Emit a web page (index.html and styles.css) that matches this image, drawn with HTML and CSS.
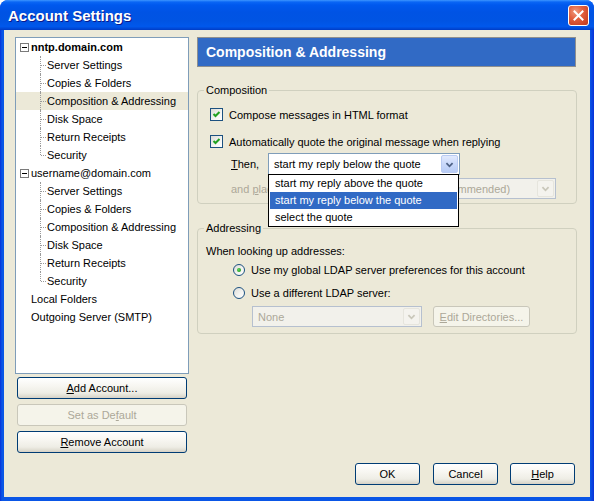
FILE: index.html
```html
<!DOCTYPE html>
<html>
<head>
<meta charset="utf-8">
<link rel="stylesheet" href="styles.css">
</head>
<body>
<div class="window">
  <div class="titlebar">
    <span class="title">Account Settings</span>
    <div class="close">
      <svg width="19" height="19" viewBox="0 0 19 19"><path d="M5.5 5.5 L13.5 13.5 M13.5 5.5 L5.5 13.5" stroke="#fff" stroke-width="2" stroke-linecap="square" fill="none"/></svg>
    </div>
  </div>
  <div class="client">
    <div class="main">
      <div class="left">
        <div class="tree">
          <div class="row root"><span class="exp"><svg width="9" height="9" viewBox="0 0 9 9"><rect x="0.5" y="0.5" width="8" height="8" fill="#fff" stroke="#7A7A7A"/><path d="M2 4.5 H7" stroke="#000" stroke-width="1"/></svg></span><b>nntp.domain.com</b></div>
          <div class="kids">
            <div class="row kid">Server Settings</div>
            <div class="row kid">Copies &amp; Folders</div>
            <div class="row kid sel">Composition &amp; Addressing</div>
            <div class="row kid">Disk Space</div>
            <div class="row kid">Return Receipts</div>
            <div class="row kid last">Security</div>
          </div>
          <div class="row root"><span class="exp"><svg width="9" height="9" viewBox="0 0 9 9"><rect x="0.5" y="0.5" width="8" height="8" fill="#fff" stroke="#7A7A7A"/><path d="M2 4.5 H7" stroke="#000" stroke-width="1"/></svg></span>username@domain.com</div>
          <div class="kids">
            <div class="row kid">Server Settings</div>
            <div class="row kid">Copies &amp; Folders</div>
            <div class="row kid">Composition &amp; Addressing</div>
            <div class="row kid">Disk Space</div>
            <div class="row kid">Return Receipts</div>
            <div class="row kid last">Security</div>
          </div>
          <div class="row top">Local Folders</div>
          <div class="row top">Outgoing Server (SMTP)</div>
        </div>
        <div class="btn side first"><span><u>A</u>dd Account...</span></div>
        <div class="btn side disabled"><span>Set as De<u>f</u>ault</span></div>
        <div class="btn side"><span><u>R</u>emove Account</span></div>
      </div>
      <div class="right">
        <div class="header">Composition &amp; Addressing</div>
        <fieldset class="group comp">
          <legend>Composition</legend>
          <div class="line cbrow r1">
            <span class="cb"><svg width="11" height="11" viewBox="0 0 11 11"><path d="M2.5 5 L4.5 7 L8.5 3" stroke="#21A121" stroke-width="2" fill="none"/></svg></span>
            <span class="lbl">Compose messages in HTML format</span>
          </div>
          <div class="line cbrow r2">
            <span class="cb"><svg width="11" height="11" viewBox="0 0 11 11"><path d="M2.5 5 L4.5 7 L8.5 3" stroke="#21A121" stroke-width="2" fill="none"/></svg></span>
            <span class="lbl">Automatically quote the original message when replying</span>
          </div>
          <div class="line selrow r3">
            <span class="slabel then"><u>T</u>hen,</span>
            <div class="combo-wrap">
              <div class="combo w-then">
                <span class="val">start my reply below the quote</span>
                <span class="arrow"><svg width="17" height="19" viewBox="0 0 17 19"><path d="M5 8 L8.5 11.5 L12 8" stroke="#4D6185" stroke-width="2" fill="none"/></svg></span>
              </div>
              <div class="list">
                <div class="item">start my reply above the quote</div>
                <div class="item hi">start my reply below the quote</div>
                <div class="item">select the quote</div>
              </div>
            </div>
          </div>
          <div class="line selrow r4">
            <span class="slabel sig dis">and <u>p</u>lace my signature</span>
            <div class="combo disabled w-sig">
              <span class="val">below my reply (recommended)</span>
              <span class="arrow"><svg width="17" height="19" viewBox="0 0 17 19"><path d="M5 8 L8.5 11.5 L12 8" stroke="#C9C7BA" stroke-width="2" fill="none"/></svg></span>
            </div>
          </div>
        </fieldset>
        <fieldset class="group addr">
          <legend>Addressing</legend>
          <div class="line look">When looking up addresses:</div>
          <div class="line radrow ra1">
            <span class="radio on"><span class="dot"></span></span>
            <span class="lbl">Use my global LDAP server preferences for this account</span>
          </div>
          <div class="line radrow ra2">
            <span class="radio"></span>
            <span class="lbl">Use a different LDAP server:</span>
          </div>
          <div class="line ldaprow">
            <div class="combo disabled w-none">
              <span class="val">None</span>
              <span class="arrow"><svg width="17" height="19" viewBox="0 0 17 19"><path d="M5 8 L8.5 11.5 L12 8" stroke="#C9C7BA" stroke-width="2" fill="none"/></svg></span>
            </div>
            <div class="btn disabled edit"><span><u>E</u>dit Directories...</span></div>
          </div>
        </fieldset>
      </div>
    </div>
    <div class="footer">
      <div class="btn foot ok"><span>OK</span></div>
      <div class="btn foot cancel"><span>Cancel</span></div>
      <div class="btn foot help"><span><u>H</u>elp</span></div>
    </div>
  </div>
</div>
</body>
</html>
```

FILE: styles.css
```css
* { box-sizing: border-box; }

body {
  margin: 0;
  background: #ffffff;
  font-family: "Liberation Sans", Arial, sans-serif;
  font-size: 11px;
  color: #000;
}

u { text-decoration: underline; text-underline-offset: 1px; }

.window {
  width: 594px;
  height: 501px;
  background: linear-gradient(90deg, #0831D9 0, #0A56E6 2px, #0A56E6 590px, #0831D9 594px);
  border-radius: 8px 8px 0 0;
  display: flex;
  flex-direction: column;
  overflow: hidden;
}

.titlebar {
  height: 30px;
  flex: none;
  display: flex;
  align-items: center;
  justify-content: space-between;
  padding: 0 5px 0 8px;
  background: linear-gradient(180deg, #3D95FF 0, #0A66F5 2px, #0058EE 5px, #0053E4 40%, #0054E3 70%, #0058EC 88%, #0046D4 96%, #003CC4 100%);
}

.title {
  color: #fff;
  font-weight: bold;
  font-size: 15px;
  text-shadow: 1px 1px 0 #0A1A8C;
  margin-top: 1px;
}

.close {
  width: 21px;
  height: 21px;
  border: 1px solid #fff;
  border-radius: 3px;
  background: radial-gradient(circle at 35% 30%, #F09A7E 0, #E2603F 40%, #CC4426 80%, #B53A1E 100%);
  margin-top: 1px;
}
.close svg { display: block; }

.client {
  flex: 1;
  margin: 0 4px 4px;
  background: #ECE9D8;
  padding: 7px 13px 0 11px;
  display: flex;
  flex-direction: column;
}

.main { display: flex; gap: 8px; }

.left { width: 174px; display: flex; flex-direction: column; }

.tree {
  height: 337px;
  border: 1px solid #7F9DB9;
  background: #fff;
}

.row {
  height: 18px;
  line-height: 18px;
  white-space: nowrap;
  position: relative;
}
.row.root { padding-left: 4px; display: flex; align-items: center; }
.exp { width: 9px; height: 9px; margin-right: 2px; display: inline-block; }
.exp svg { display: block; }
.row.top { padding-left: 15px; }
.row.kid { padding-left: 31px; }
.row.kid.sel { background: #ECE9D8; }
.row.kid::before {
  content: "";
  position: absolute;
  left: 24px;
  top: 0;
  height: 18px;
  border-left: 1px dotted #9A9A9A;
}
.row.kid.last::before { height: 9px; }
.row.kid::after {
  content: "";
  position: absolute;
  left: 25px;
  top: 9px;
  width: 5px;
  border-top: 1px dotted #9A9A9A;
}

.btn {
  height: 22px;
  border: 1px solid #003C74;
  border-radius: 3px;
  background: linear-gradient(180deg, #FFFFFF 0, #F7F6F1 40%, #EEEDE5 75%, #DEDBD0 92%, #D6D0C5 100%);
  display: flex;
  align-items: center;
  justify-content: center;
  white-space: nowrap;
}
.btn.disabled {
  border-color: #C9C7BA;
  background: #F5F4EA;
  color: #ACA899;
}

.btn.side { width: 170px; margin: 5px 0 0 2px; }
.btn.side.first { margin-top: 3px; }

.right { width: 380px; }

.header {
  width: 379px;
  height: 30px;
  border: 1px solid #8E8F8F;
  background: #316AC5;
  color: #fff;
  font-weight: bold;
  font-size: 14px;
  padding-left: 8px;
  display: flex;
  align-items: center;
}

.group {
  margin: 0;
  border: 1px solid #D0D0BF;
  border-radius: 4px;
  min-width: 0;
}
.group legend {
  line-height: 13px;
  padding: 0 2px;
}
.group.comp { margin-top: 17px; padding: 11px 0 4px 12px; }
.group.comp legend { margin-left: -6px; }
.group.addr { margin-top: 18px; padding: 9px 0 6px 8px; }
.group.addr legend { margin-left: -2px; }

.line { display: flex; align-items: center; white-space: nowrap; }

.cbrow { height: 13px; }
.cbrow.r2 { margin-top: 14px; }
.cb {
  width: 13px;
  height: 13px;
  border: 1px solid #1C5180;
  background: linear-gradient(135deg, #DCDCD7 0, #F5F5F3 60%, #FFFFFF 100%);
  flex: none;
}
.cb svg { display: block; }
.lbl { margin-left: 6px; }

.selrow { margin-left: 21px; }
.selrow.r3 { margin-top: 5px; height: 22px; }
.selrow.r4 { margin-top: 3px; height: 21px; }
.slabel.then { width: 37px; }
.slabel.sig { width: 119px; }
.dis { color: #ACA899; }

.combo-wrap { position: relative; z-index: 5; }

.combo {
  height: 22px;
  border: 1px solid #7F9DB9;
  background: #fff;
  display: flex;
  align-items: center;
  padding: 1px;
}
.combo .val { flex: 1; padding-left: 4px; overflow: hidden; }
.combo .arrow {
  width: 17px;
  height: 100%;
  border: 1px solid #B9CBF3;
  border-radius: 2px;
  background: linear-gradient(180deg, #E2EAFD 0, #C9D8FA 50%, #B8CCF6 100%);
  display: flex;
  align-items: center;
  justify-content: center;
  flex: none;
}
.combo .arrow svg { display: block; }
.combo.disabled {
  height: 21px;
  border-color: #B6C0CF;
  background: #F2F1EB;
  color: #ACA899;
}
.combo.disabled .arrow {
  border-color: #E6E5DD;
  background: #F4F3EE;
}

.w-then { width: 192px; }
.w-sig { width: 206px; }
.w-none { width: 170px; }

.list {
  position: absolute;
  left: 0;
  top: 21px;
  width: 191px;
  border: 1px solid #000;
  background: #fff;
  padding: 0;
}
.item {
  height: 17px;
  line-height: 17px;
  padding-left: 6px;
}
.item.hi {
  background: #316AC5;
  color: #fff;
  margin: 0 1px;
  padding-left: 5px;
}

.look { height: 13px; }
.radrow { margin-left: 27px; height: 12px; }
.radrow.ra1 { margin-top: 7px; }
.radrow.ra2 { margin-top: 11px; }
.radio {
  width: 12px;
  height: 12px;
  border-radius: 50%;
  border: 1px solid #1C5180;
  background: linear-gradient(135deg, #DCDCD7 0, #F3F3F0 55%, #FFFFFF 100%);
  display: flex;
  align-items: center;
  justify-content: center;
  flex: none;
}
.radio .dot {
  width: 4px;
  height: 4px;
  border-radius: 50%;
  background: radial-gradient(circle at 40% 40%, #5FD35F 0, #21A121 70%);
}

.ldaprow { margin-left: 46px; margin-top: 7px; height: 21px; }
.btn.edit { width: 97px; height: 21px; margin-left: 11px; }

.footer {
  display: flex;
  justify-content: flex-end;
  margin-top: 10px;
  padding-right: 2px;
}
.btn.foot { width: 65px; }
.btn.cancel { margin-left: 13px; }
.btn.help { margin-left: 12px; }
```
